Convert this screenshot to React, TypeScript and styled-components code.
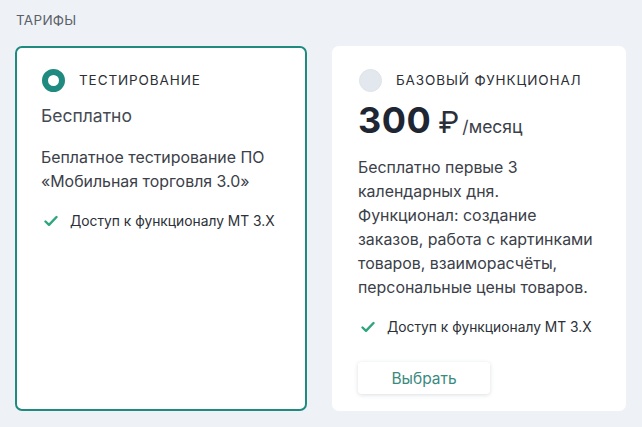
import styled, { createGlobalStyle } from "styled-components"

const GlobalStyle = createGlobalStyle`
  html, body {
    margin: 0;
    padding: 0;
    background: #eef2f7;
  }
  body {
    font-family: Inter, "Noto Sans", sans-serif;
    color: #333a44;
  }
`

type Plan = {
  id: number
  title: string
  selected: boolean
  price?: string
  free?: string
  description: string[]
  feature: string
  action?: string
}

const plans: Plan[] = [
  {
    id: 1,
    title: "ТЕСТИРОВАНИЕ",
    selected: true,
    free: "Бесплатно",
    description: ["Беплатное тестирование ПО", "«Мобильная торговля 3.0»"],
    feature: "Доступ к функционалу МТ 3.X",
  },
  {
    id: 2,
    title: "БАЗОВЫЙ ФУНКЦИОНАЛ",
    selected: false,
    price: "300",
    description: [
      "Бесплатно первые 3",
      "календарных дня.",
      "Функционал: создание",
      "заказов, работа с картинками",
      "товаров, взаиморасчёты,",
      "персональные цены товаров.",
    ],
    feature: "Доступ к функционалу МТ 3.X",
    action: "Выбрать",
  },
]

function Check() {
  return (
    <svg width="14" height="12" viewBox="0 0 14 12" fill="none">
      <path
        d="M1.5 6.5 L5 9.8 L12.5 2"
        stroke="#2ea57c"
        strokeWidth="2.4"
        strokeLinecap="round"
        strokeLinejoin="round"
      />
    </svg>
  )
}

export default function App() {
  return (
    <Page>
      <GlobalStyle />
      <Heading>ТАРИФЫ</Heading>
      <Grid>
        {plans.map((plan) => (
          <Card key={plan.id} $selected={plan.selected}>
            <CardHeader>
              <Radio $selected={plan.selected} />
              <PlanTitle>{plan.title}</PlanTitle>
            </CardHeader>
            {plan.free && <Free>{plan.free}</Free>}
            {plan.price && (
              <Price>
                <Amount>{plan.price}</Amount>
                <Currency>₽</Currency>
                <Period>/месяц</Period>
              </Price>
            )}
            <Description>
              {plan.description.map((line) => (
                <span key={line}>{line}</span>
              ))}
            </Description>
            <Feature>
              <Check />
              {plan.feature}
            </Feature>
            {plan.action && <SelectButton>{plan.action}</SelectButton>}
          </Card>
        ))}
      </Grid>
    </Page>
  )
}

const Page = styled.div`
  padding: 11px 16px 16px 15px;
  width: 642px;
  height: 427px;
  box-sizing: border-box;
`

const Heading = styled.div`
  font-size: 13.5px;
  color: #5a6068;
  letter-spacing: 0.3px;
  line-height: 18px;
  padding-left: 1px;
  margin-bottom: 17px;
`

const Grid = styled.div`
  display: grid;
  grid-template-columns: 292px 294px;
  column-gap: 25px;
`

const Card = styled.div<{ $selected: boolean }>`
  display: flex;
  flex-direction: column;
  align-items: flex-start;
  background: #fff;
  border-radius: 7px;
  border: 2px solid ${(p) => (p.$selected ? "#1e8a80" : "transparent")};
  padding: 20px 24px 15px 24px;
  height: 365px;
  box-sizing: border-box;
`

const CardHeader = styled.div`
  display: flex;
  align-items: center;
  gap: 14px;
  height: 24px;
`

const Radio = styled.span<{ $selected: boolean }>`
  width: 23px;
  height: 23px;
  border-radius: 50%;
  box-sizing: border-box;
  margin-left: 1px;
  background: ${(p) => (p.$selected ? "#fff" : "#e3e8ef")};
  border: ${(p) => (p.$selected ? "6px solid #1e8a80" : "1px solid #dde3ea")};
`

const PlanTitle = styled.span`
  font-size: 13.5px;
  letter-spacing: 0.9px;
  color: #2c2f36;
`

const Free = styled.div`
  font-size: 17.5px;
  color: #464b53;
  margin-top: 12px;
  margin-bottom: 4px;
  line-height: 24px;
`

const Price = styled.div`
  display: flex;
  align-items: baseline;
  margin-top: 6px;
`

const Amount = styled.span`
  font-size: 36px;
  font-weight: 700;
  color: #1f2633;
  line-height: 44px;
  letter-spacing: 0.5px;
`

const Currency = styled.span`
  font-size: 30px;
  color: #2a303a;
  margin-left: 7px;
`

const Period = styled.span`
  font-size: 17.5px;
  color: #3a404a;
  margin-left: 3px;
`

const Description = styled.div`
  display: flex;
  flex-direction: column;
  font-size: 15.9px;
  line-height: 24px;
  color: #3b4049;
  margin-top: 14px;
`

const Feature = styled.div`
  display: flex;
  align-items: center;
  gap: 12px;
  font-size: 13.8px;
  color: #2c3038;
  margin-top: 19px;
  padding-left: 3px;
`

const SelectButton = styled.button`
  margin-top: 27px;
  width: 132px;
  height: 32px;
  border: none;
  border-radius: 4px;
  background: #fff;
  box-shadow: 0 1px 4px rgba(30, 50, 80, 0.16);
  font-family: Inter, "Noto Sans", sans-serif;
  font-size: 15.5px;
  color: #3a8a80;
  cursor: pointer;
`
